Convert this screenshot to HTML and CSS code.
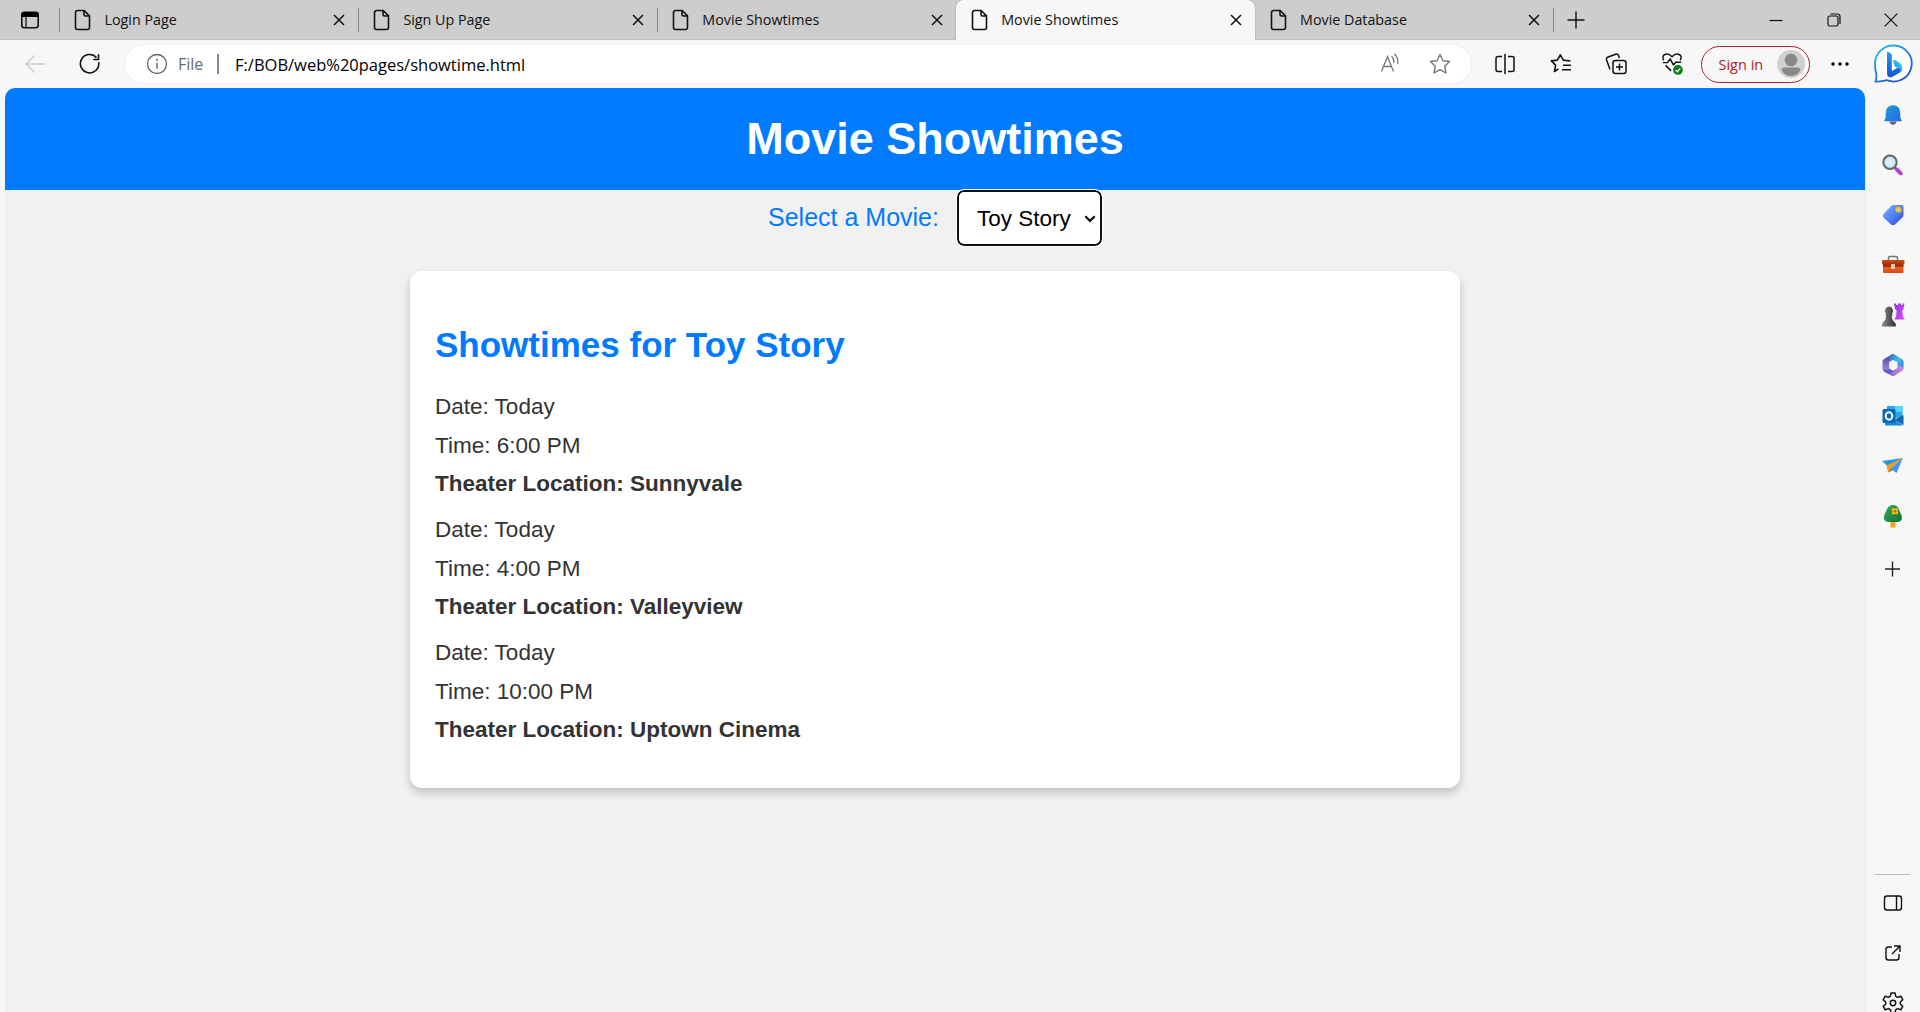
FILE: index.html
```html
<!DOCTYPE html>
<html lang="en">
<head>
<meta charset="utf-8">
<title>Movie Showtimes</title>
<link rel="stylesheet" href="styles.css">
</head>
<body>
<svg width="0" height="0" class="defs">
  <defs>
    <symbol id="file" viewBox="0 0 18 22"><path d="M3.500 1.500h6.700l5.300 5.400v11.600a2 2 0 0 1-2 2h-10a2 2 0 0 1-2-2v-15a2 2 0 0 1 2-2z M10 1.500v4a1.500 1.500 0 0 0 1.500 1.500h4" fill="none" stroke="#111" stroke-width="1.600"/></symbol>
    <symbol id="x" viewBox="0 0 12 12"><path d="M1 1l10 10M11 1L1 11" stroke="#111" stroke-width="1.500"/></symbol>
  </defs>
</svg>
<div class="window">
  <header class="tabs">
    <div class="tab-menu"><svg width="20" height="20" viewBox="0 0 20 20"><rect x="1.800" y="2.300" width="16.400" height="15.400" rx="2.500" fill="none" stroke="#111" stroke-width="1.600"/><path d="M1.500 7V4.500A2.500 2.500 0 0 1 4 2h12a2.500 2.500 0 0 1 2.500 2.500V7z"/><path d="M6 6v11" stroke="#111" stroke-width="1.300"/></svg></div>
    <div class="tab"><svg class="file"><use href="#file"/></svg><span>Login Page</span><svg class="x"><use href="#x"/></svg></div>
    <div class="tab"><svg class="file"><use href="#file"/></svg><span>Sign Up Page</span><svg class="x"><use href="#x"/></svg></div>
    <div class="tab"><svg class="file"><use href="#file"/></svg><span>Movie Showtimes</span><svg class="x"><use href="#x"/></svg></div>
    <div class="tab active"><svg class="file"><use href="#file"/></svg><span>Movie Showtimes</span><svg class="x"><use href="#x"/></svg></div>
    <div class="tab after"><svg class="file"><use href="#file"/></svg><span>Movie Database</span><svg class="x"><use href="#x"/></svg></div>
    <div class="new-tab"><svg width="18" height="18" viewBox="0 0 18 18"><path d="M9 .5v17M.5 9h17" stroke="#111" stroke-width="1.400"/></svg></div>
    <div class="controls">
      <svg width="14" height="14" viewBox="0 0 14 14"><path d="M.5 7.500h13" stroke="#111" stroke-width="1.200"/></svg>
      <svg width="14" height="14" viewBox="0 0 14 14"><g fill="none" stroke="#111" stroke-width="1.200"><rect x="1" y="3" width="10" height="10" rx="1.800"/><path d="M3.500 1h7A2.500 2.500 0 0 1 13 3.500v7.500"/></g></svg>
      <svg width="14" height="14" viewBox="0 0 14 14"><path d="M.7.700l12.600 12.600M13.300.700L.7 13.300" stroke="#111" stroke-width="1.200"/></svg>
    </div>
  </header>

  <div class="toolbar">
    <div class="nav">
      <svg width="22" height="20" viewBox="0 0 22 20"><path d="M10.500 1.500L2 10l8.500 8.500M2 10h19" fill="none" stroke="#cbcbcb" stroke-width="1.500"/></svg>
    </div>
    <div class="nav">
      <svg width="22" height="22" viewBox="0 0 22 22"><path d="M19.700 9.200A9.200 9.200 0 1 1 17.500 4.600M19.500 1.200v5.300h-5.300" fill="none" stroke="#111" stroke-width="1.600"/></svg>
    </div>
    <div class="address">
      <svg width="22" height="22" viewBox="0 0 22 22"><circle cx="11" cy="11" r="9.500" fill="none" stroke="#666" stroke-width="1.300"/><path d="M11 9.700v6" stroke="#666" stroke-width="1.400"/><circle cx="11" cy="6.700" r="1" fill="#666"/></svg>
      <span class="scheme">File</span>
      <span class="bar"></span>
      <span class="url">F:/BOB/web%20pages/showtime.html</span>
      <span class="address-actions">
        <svg width="22" height="22" viewBox="0 0 22 22" fill="none" stroke="#777" stroke-width="1.300"><path d="M2.500 18.500L8.500 3.500l6 15M4.500 13.500h8M12.500 3.200q2.800 2.500 2.400 6.500M15.300.800q4.300 3.800 3.400 10"/></svg>
        <svg width="22" height="22" viewBox="0 0 22 22" fill="none" stroke="#777" stroke-width="1.400" stroke-linejoin="round"><path d="M11 1.500l2.900 6.200 6.700.8-4.900 4.700 1.300 6.800-6-3.300L5 20l1.300-6.800L1.400 8.500l6.700-.8z"/></svg>
      </span>
    </div>
    <div class="tools">
      <svg width="22" height="22" viewBox="0 0 22 22" fill="none" stroke="#111" stroke-width="1.500"><path d="M8 3.500H4a2 2 0 0 0-2 2v11a2 2 0 0 0 2 2h4M11 1v20M14 3.500h4a2 2 0 0 1 2 2v11a2 2 0 0 1-2 2h-4"/></svg>
      <svg width="22" height="22" viewBox="0 0 22 22" fill="none" stroke="#111" stroke-width="1.600" stroke-linejoin="round"><path d="M8.500 15.800L4.500 18.500l1.100-6.400L1.300 7.900l6.100-.8L10.300 1.800l3 5.300 7.200.9M13 12.200h8M12 16.700h9"/></svg>
      <svg width="22" height="22" viewBox="0 0 22 22" fill="none" stroke="#111" stroke-width="1.500"><rect x="8" y="7.500" width="13" height="13" rx="2.500"/><path d="M14.500 10.500v7M11 14h7M5 16.500L1.600 7a2.500 2.500 0 0 1 1.500-3L10.700 1.200a2.200 2.200 0 0 1 2.800 1.300l.9 2.500"/></svg>
      <svg class="heart" width="22" height="24" viewBox="0 0 24 26" fill="none" stroke="#111" stroke-width="1.600" stroke-linejoin="round"><path d="M3 9Q.3 3.900 5 2.300 8.500 1.200 12 5q3.500-3.800 7-2.700Q23.700 3.900 21 9M2 11.500h5l3-4 3.500 6.500 2.500-3h6M5 14.500l6 6"/><circle cx="18.500" cy="19.500" r="5.300" fill="#0b7c16" stroke="none"/><path d="M16 19.700l1.800 1.800 3.200-3.700" stroke="#fff" stroke-width="1.500"/></svg>
    </div>
    <div class="signin"><span>Sign in</span>
      <svg width="28" height="28" viewBox="0 0 28 28"><circle cx="14" cy="14" r="14" fill="#d2d0ce"/><circle cx="14" cy="10" r="6.300" fill="#8a8886"/><path d="M4.500 20q0-2.500 3-2.500h13q3 0 3 2.500-3 6-9.500 6T4.500 20z" fill="#8a8886"/></svg>
    </div>
    <div class="dots"><svg width="18" height="4" viewBox="0 0 18 4"><circle cx="2" cy="2" r="1.700"/><circle cx="9" cy="2" r="1.700"/><circle cx="16" cy="2" r="1.700"/></svg></div>
    <div class="bing">
      <svg width="40" height="40" viewBox="0 0 40 40">
        <defs><linearGradient id="ring" x2=".6" y2="1"><stop stop-color="#29bdf0"/><stop offset="1" stop-color="#1b55cf"/></linearGradient><linearGradient id="b1" x2="0" y2="1"><stop stop-color="#269df0"/><stop offset="1" stop-color="#1650db"/></linearGradient><linearGradient id="b2" x1="1" x2="0" y2="1"><stop stop-color="#3be0e0"/><stop offset="1" stop-color="#2088ed"/></linearGradient></defs>
        <path d="M20.500 1.500a18 18 0 1 1-6.500 34.700Q8 37.800 2.500 37.500q1.300-3 .8-8Q2 26 2 20A18.300 18.300 0 0 1 20.500 1.500z" fill="#fff" stroke="url(#ring)" stroke-width="1.800"/>
        <path d="M14 8.200q0-.8.900-.4l3 1.600q.9.500.9 1.500V27l6.200-3.500 3.500 0q0 4-2.500 5.500l-7 4q-5 1.500-5-4z" fill="url(#b1)"/>
        <path d="M20.500 15.700q7.500 2.300 8.700 7 .7 3.800-1.400 6.300.5-3.700-3-5l-2-1q-1-.5-1.400-1.500L20.200 17q-.3-1.200.3-1.300z" fill="url(#b2)"/>
      </svg>
    </div>
  </div>

  <div class="main">
    <div class="page">
      <div class="page-header"><h1>Movie Showtimes</h1></div>
      <div class="picker"><label>Select a Movie:</label>
        <div class="select"><span>Toy Story</span><svg width="12" height="8" viewBox="0 0 12 8"><path d="M1.300 1.200L6 5.900l4.700-4.700" fill="none" stroke="#111" stroke-width="2.200"/></svg></div>
      </div>
      <section class="card">
        <h2>Showtimes for Toy Story</h2>
        <div class="show"><p>Date: Today</p><p>Time: 6:00 PM</p><p class="place">Theater Location: Sunnyvale</p></div>
        <div class="show"><p>Date: Today</p><p>Time: 4:00 PM</p><p class="place">Theater Location: Valleyview</p></div>
        <div class="show"><p>Date: Today</p><p>Time: 10:00 PM</p><p class="place">Theater Location: Uptown Cinema</p></div>
      </section>
    </div>

    <aside class="sidebar">
      <div class="apps">
        <svg viewBox="0 0 24 24"><defs><linearGradient id="bell" x2="1" y2="1"><stop stop-color="#1ba5d3"/><stop offset="1" stop-color="#2b61ec"/></linearGradient></defs><path d="M8.500 18.500h7q-.5 3.300-3.500 3.300t-3.500-3.300z" fill="#666"/><path d="M12 2.200q7 0 7.300 7.500v4.800l1.700 3.800H3l1.700-3.800V9.700Q5 2.200 12 2.200z" fill="url(#bell)"/></svg>
        <svg viewBox="0 0 24 24"><defs><radialGradient id="lens"><stop stop-color="#e8f8ff"/><stop offset="1" stop-color="#b9e1fa"/></radialGradient></defs><path d="M13 14l3 3" stroke="#555" stroke-width="2"/><path d="M15.700 16.300l4 4" stroke="#bd37e5" stroke-width="4" stroke-linecap="round"/><circle cx="9" cy="9.300" r="6.700" fill="url(#lens)" stroke="#666" stroke-width="2"/></svg>
        <svg viewBox="0 0 24 24"><defs><linearGradient id="tag" x2="1" y2="1"><stop stop-color="#80b5ff"/><stop offset=".6" stop-color="#4777f2"/><stop offset="1" stop-color="#4637ce"/></linearGradient></defs><path d="M12.500 2h8q2 0 2 2v8q0 1.500-1 2.500l-7.500 7q-2 1.500-4 0l-7.300-6.800q-1.700-2 0-4L10 3.200Q11 2 12.500 2z" fill="url(#tag)"/><circle cx="17.500" cy="6.800" r="2.300" fill="#b7c7ff" stroke="#edbd18" stroke-width="1.500"/></svg>
        <svg viewBox="0 0 24 24"><defs><linearGradient id="box" x2="0" y2="1"><stop stop-color="#bd3c0d"/><stop offset=".4" stop-color="#982800"/><stop offset=".45" stop-color="#ed6527"/><stop offset="1" stop-color="#d94710"/></linearGradient></defs><path d="M7.500 7V5q0-1.500 1.500-1.500h6q1.500 0 1.500 1.500v2" fill="none" stroke="#777" stroke-width="1.500"/><rect x="1" y="7" width="22.500" height="4.500" rx="1" fill="#c54614"/><path d="M2 9h20.500v10q0 1-1 1H3q-1 0-1-1z" fill="url(#box)"/><rect x="10" y="11" width="4" height="5" rx="1" fill="#ccc"/></svg>
        <svg viewBox="0 0 24 24"><defs><linearGradient id="rook" x2="1" y2="1"><stop stop-color="#9335df"/><stop offset="1" stop-color="#d94dff"/></linearGradient><linearGradient id="pawn" x2="1"><stop stop-color="#888"/><stop offset="1" stop-color="#333"/></linearGradient></defs><path d="M13 .5h2v1.500h2V.500h3V2h1.500V.5h2L22.500 6l-1.300 1.500.8 6.500q1.500.5 1.500 2.500H13.500q0-2 1.500-2.500l.7-6.500L14 6z" fill="url(#rook)"/><path d="M8 3.500a4.200 4.200 0 0 1 2.800 7.200l1 1.300-1 1q0 4 3 6.500l1 1.500v2.500H1v-2.500L2 19.500q3-2.500 3.200-6.500l-1-1 1-1.300A4.200 4.200 0 0 1 8 3.500z" fill="url(#pawn)"/></svg>
        <svg viewBox="0 0 24 24"><defs><linearGradient id="m1" y2="1" x2="0"><stop stop-color="#3b48a8"/><stop offset="1" stop-color="#b18be0"/></linearGradient><linearGradient id="m2" x2="1" y2="1"><stop stop-color="#3763c5"/><stop offset=".5" stop-color="#48bde9"/><stop offset="1" stop-color="#2c65cc"/></linearGradient><linearGradient id="m3" x2="1"><stop stop-color="#8a62c8"/><stop offset="1" stop-color="#c78add"/></linearGradient></defs><path d="M11.500 1L3 6Q1.500 7 1.500 8.500v7q0 1.500 1.500 2.300l3.500 1.700 4-2.500-2.200-2V9l5-3z" fill="url(#m1)"/><path d="M9.500 2.200L12 .8l8.500 5Q22.500 7 22.500 8.500v7l-6 2.500V9.500l-5-3-3.200 2V4q0-1 1.200-1.800z" fill="url(#m2)"/><path d="M22.500 14.500q0 2.500-1.500 3.500l-7.500 4.700q-1.500.7-3 0L4 18.500l6 .3 6.500-3.800 2-3z" fill="url(#m3)"/><path d="M2 16.500l8.500.3 2.500 1.400-5.500 3-5-3z" fill="#5e62cb"/><path d="M12 7.800l3.700 2.200v4L12 16.200 8.300 14v-4z" fill="#f7f7f7"/></svg>
        <svg viewBox="0 0 24 24"><path d="M6 2h15.500v12H6z" fill="#28a8ea"/><path d="M13.500 2h8v6h-8z" fill="#50d9ff"/><path d="M4 11l18.500 10.500H5q-1 0-1-1z" fill="#1188dc"/><path d="M22.500 11v10L13 16z" fill="#1069ae"/><rect x="1.500" y="5" width="13" height="14" rx="1.500" fill="#0869ba"/><ellipse cx="8" cy="12" rx="3.300" ry="3.700" fill="none" stroke="#fff" stroke-width="2"/></svg>
        <svg viewBox="0 0 24 24"><path d="M1 7l21-3L8.500 14z" fill="#2898dd"/><path d="M5.500 11.500L22 4 9.500 14.500 7 18.500z" fill="#f3a01b"/><path d="M22 4l-6.500 15-6-4.500z" fill="#4192f7"/><path d="M9.500 14.500L7 18.500l5-2.500z" fill="#a76516"/></svg>
        <svg viewBox="0 0 24 24"><defs><linearGradient id="tree" x2="1" y2="1"><stop stop-color="#3dac4c"/><stop offset="1" stop-color="#12713b"/></linearGradient></defs><path d="M9.500 16h5v7.500h-5z" fill="#eda323"/><path d="M12 1q5 0 6.500 6 3 5 2.300 8-1 3-4.500 3H8q-4 0-5-3-.7-3 2.300-8Q7 1 12 1z" fill="url(#tree)"/><g fill="#f4b910"><circle cx="12.500" cy="5.700" r="1.800"/><circle cx="15.500" cy="5.700" r="1.800"/><circle cx="12.500" cy="8.700" r="1.800"/><circle cx="15.500" cy="8.700" r="1.800"/></g><circle cx="14" cy="7.200" r="1.200" fill="#d95a18"/></svg>
        <svg viewBox="0 0 24 24"><path d="M11.500 4.500v15M4 12h15" stroke="#222" stroke-width="1.400"/></svg>
      </div>
      <div class="system">
        <svg viewBox="0 0 24 24" fill="none" stroke="#111" stroke-width="1.400"><rect x="3.500" y="5" width="17" height="14" rx="2.500"/><path d="M15.500 5v14"/></svg>
        <svg viewBox="0 0 24 24" fill="none" stroke="#111" stroke-width="1.400"><path d="M11 6H7.500A2.500 2.500 0 0 0 5 8.500v8A2.500 2.500 0 0 0 7.500 19h8a2.500 2.500 0 0 0 2.500-2.500V13M13 5h6v6M19 5l-8 8"/></svg>
        <svg viewBox="0 0 24 24" fill="none" stroke="#111" stroke-width="1.500" stroke-linejoin="round"><path d="M10 2h4l.6 3.200 2 1.200 3.200-1.200 2 3.600-2.500 2.200v2l2.500 2.200-2 3.600-3.200-1.200-2 1.200L14 22h-4l-.6-3.200-2-1.200-3.200 1.200-2-3.600L4.700 13v-2L2.200 8.800l2-3.600 3.200 1.200 2-1.200z"/><circle cx="12" cy="12" r="2.700"/></svg>
      </div>
    </aside>
  </div>
</div>
</body>
</html>
```
FILE: styles.css
```css
* { box-sizing: border-box; }
body { margin: 0; background: #f7f7f7; overflow: hidden; font-family: "Open Sans", sans-serif; color: #111; }
svg { display: block; flex: none; }
.defs { position: absolute; }
.window { height: 1012px; display: flex; flex-direction: column; }

.tabs { height: 40px; flex: none; display: flex; background: #cdcdcd; box-shadow: inset 0 -1px #bfbfbf; }
.tab-menu { width: 59px; height: 40px; padding-left: 20px; display: flex; align-items: center; }
.tab { width: 298.9px; height: 40px; display: flex; align-items: center; padding: 0 13px 1px 15px; font-size: 14.300px; background: linear-gradient(#858585, #858585) left 8px / 1.4px 24px no-repeat; }
.tab span { margin-left: 12.500px; flex: 1; }
.file { width: 18px; height: 22px; }
.x { width: 12px; height: 12px; }
.active { background: #f7f7f7; border-radius: 8px 8px 0 0; box-shadow: 0 0 2px #999; clip-path: inset(0 -2px 0 -2px); }
.after { background: none; }
.new-tab { width: 60px; padding-left: 14px; display: flex; align-items: center; background: linear-gradient(#858585, #858585) left 8px / 1.4px 24px no-repeat; }
.controls { margin-left: auto; display: flex; align-items: center; gap: 43.500px; padding-right: 22px; }

.toolbar { height: 48px; flex: none; display: flex; align-items: center; padding: 0 7px 0 7px; background: #f7f7f7; }
.nav { width: 55px; display: flex; justify-content: center; }
.address { width: 1346px; height: 38px; margin-left: 8px; border-radius: 19px; background: #fff; box-shadow: 0 0 3px #e5e5e5; display: flex; align-items: center; padding: 0 20px 0 21px; font-size: 16px; }
.scheme { margin-left: 10px; width: 39px; color: #6b6b6b; }
.bar { width: 1.500px; height: 20px; background: #888; }
.url { margin-left: 16.500px; color: #000; font-size: 16.500px; }
.address-actions { margin-left: auto; display: flex; gap: 28px; }
.tools { display: flex; align-items: center; gap: 33.500px; margin-left: 23px; }
.signin { width: 109px; height: 37px; margin-left: 18px; border: 1.500px solid #b3202a; border-radius: 19px; color: #b3202a; font-size: 14.500px; display: flex; align-items: center; justify-content: space-between; padding: 0 4px 0 17px; }
.dots { width: 60px; display: flex; justify-content: center; }
.bing { margin-left: auto; }

.main { flex: 1; min-height: 0; display: flex; padding-left: 5px; }
.page { width: 1860px; background: #f1f1f1; border-radius: 10px 10px 0 0; overflow: hidden; font-family: "Liberation Sans", Arial, sans-serif; }
.page-header { height: 102px; background: #007bff; display: flex; justify-content: center; align-items: center; }
h1 { margin: 0; color: #fff; font-size: 45px; line-height: 52px; }
.picker { height: 81px; display: flex; justify-content: center; color: #007bff; font-size: 25px; }
.picker label { line-height: 55px; }
.select { width: 145px; height: 56px; margin-left: 18px; border: 2px solid #101010; border-radius: 7px; outline: 1px solid #fff; background: #fff; color: #000; font-size: 22.500px; display: flex; align-items: center; justify-content: space-between; padding: 1px 4px 0 18px; }
.card { width: 1050px; height: 517px; margin: 0 auto; padding: 54px 25px 0; background: #fff; border-radius: 12px; box-shadow: 0 5px 10px rgba(0,0,0,.2); color: #333; }
h2 { margin: 0 0 23px; color: #007bff; font-size: 35px; line-height: 40px; }
.show { margin-bottom: 7.600px; font-size: 22.500px; }
.show p { margin: 0; line-height: 38.500px; }
.place { font-weight: bold; }

.sidebar { width: 54px; border-left: 1px solid #e5e5e5; display: flex; flex-direction: column; align-items: center; }
.apps, .system { display: flex; flex-direction: column; }
.apps { padding-top: 15px; gap: 26.100px; }
.apps svg, .system svg { width: 24px; height: 24px; }
.apps svg:last-child { margin-top: 3px; }
.system { margin-top: auto; width: 35px; align-items: center; border-top: 1px solid #bbb; padding-top: 15.500px; gap: 26.200px; height: 138px; flex: none; }
```
